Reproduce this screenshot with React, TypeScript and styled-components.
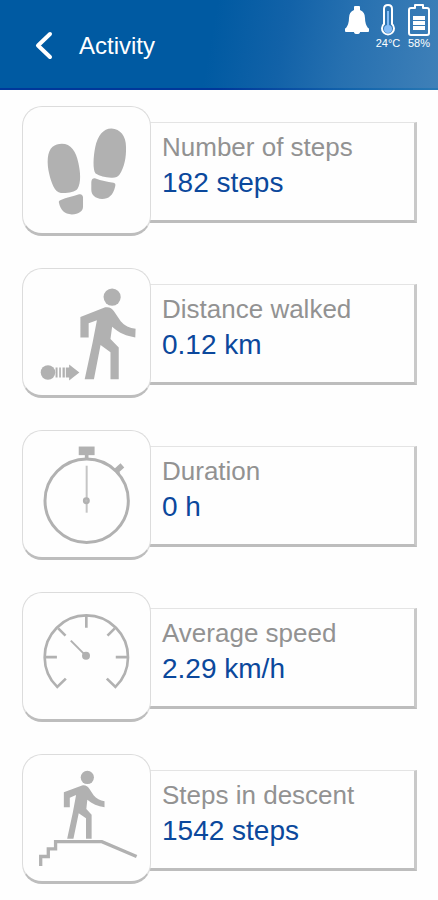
import React from "react";
import styled, { createGlobalStyle } from "styled-components";

const GlobalStyle = createGlobalStyle`
  *, *::before, *::after { box-sizing: border-box; }
  body {
    margin: 0;
    background: #fefefe;
    font-family: "Liberation Sans", Arial, sans-serif;
  }
`;

const Header = styled.header`
  display: flex;
  justify-content: space-between;
  height: 90px;
  background:
    linear-gradient(90deg, #00379a 50%, #1264ac 80%, #2878b4) bottom / 100% 2px no-repeat,
    linear-gradient(100deg, #005aa2 48%, #1262a8 64%, #2670b0 78%, #3f80b8 100%);
  color: #fff;
`;

const Heading = styled.div`
  display: flex;
  align-items: center;
  gap: 24px;
  padding-left: 34px;
`;

const BackButton = styled.button`
  display: flex;
  padding: 0;
  border: 0;
  background: none;
  color: inherit;
  cursor: pointer;
`;

const Title = styled.h1`
  margin: 0;
  padding-top: 2px;
  font-size: 24px;
  font-weight: 400;
  line-height: 28px;
`;

const StatusBar = styled.div`
  display: flex;
  gap: 5px;
  padding: 4px 6px 0 0;
`;

const Status = styled.div`
  display: flex;
  flex-direction: column;
  align-items: center;
  min-width: 26px;
  font-size: 11px;
  line-height: 14px;
`;

const List = styled.ul`
  display: flex;
  flex-direction: column;
  gap: 32px;
  margin: 0;
  padding: 16px 21px 16px 22px;
  list-style: none;
`;

const Row = styled.li`
  display: flex;
`;

const Tile = styled.div`
  flex: none;
  z-index: 1;
  width: 129px;
  height: 130px;
  border: 1px solid #dcdcdc;
  border-bottom: 3px solid #bdbdbd;
  border-radius: 20px;
  background: #fefefe;
`;

const TileIcon = styled.svg`
  display: block;
  width: 100%;
  height: 100%;
  color: #b1b1b1;
`;

const Panel = styled.dl`
  flex: 1;
  margin: 16px 0 13px -3px;
  padding: 8px 14px 10px;
  border-top: 1px solid #e4e4e4;
  border-right: 3px solid #c9c9c9;
  border-bottom: 3px solid #bdbdbd;
`;

const Label = styled.dt`
  font-size: 26px;
  line-height: 32px;
  color: #929292;
`;

const Value = styled.dd`
  margin: 2px 0 0;
  font-size: 28px;
  line-height: 36px;
  color: #0b489c;
`;

const WALKER =
  "M272 143 C284 141 292 145 298 154 L319 185 C330 198 346 206 364 208 L363 234 C337 230 315 222 293 202 L288 239 L313 264 L313 360 L288 360 L288 279 L258 257 L238 360 L210 360 L234 249 L247 182 L222 191 L222 234 L197 234 L197 172 Z";

const FootprintsIcon = () => (
  <g fill="currentColor">
    <path d="M141 138 C168 138 184 161 191 196 C197 224 200 254 188 275 C180 284 160 288 138 287 C119 284 109 255 103 230 C95 197 96 161 113 147 C121 141 130 138 141 138 Z" />
    <path d="M138 308 C155 301 174 297 193 291 C200 289 205 294 205 301 L205 328 C205 342 193 351 171 352 C149 351 137 339 132 316 C131 312 133 310 138 308 Z" />
    <path d="M291 92 C318 93 335 115 335 148 C336 179 330 210 315 232 C310 239 302 242 290 241 C271 240 256 236 243 228 C234 218 236 176 242 148 C249 114 266 92 291 92 Z" />
    <path d="M243 243 C260 250 278 252 297 256 C303 257 304 262 302 268 C296 294 282 305 263 305 C241 304 230 292 230 277 L230 255 C230 246 235 241 243 243 Z" />
  </g>
);

const DistanceIcon = () => (
  <g fill="currentColor">
    <circle cx="293" cy="112" r="26" />
    <path d={WALKER} />
    <circle cx="99" cy="340" r="22" />
    <path d="M122 325h6v30h-6z M133 325h5v30h-5z M143 325h7v30h-7z M153 325h10v-9l31 24l-31 24v-9h-10z" />
  </g>
);

const StopwatchIcon = () => (
  <g fill="none" stroke="currentColor">
    <circle cx="216" cy="238" r="126" strokeWidth="9" />
    <path d="M216 99 V112" strokeWidth="11" />
    <path d="M192 87 H240" strokeWidth="26" />
    <path d="M304 149 L324 131" strokeWidth="17" />
    <path d="M300 143 L315 157" strokeWidth="8" />
    <path d="M216 132 V274" strokeWidth="6" strokeOpacity="0.75" />
    <circle cx="215" cy="238" r="7" fill="#bdbdbd" strokeWidth="7" />
  </g>
);

const GaugeIcon = () => (
  <g fill="none" stroke="currentColor" strokeWidth="8">
    <path d="M153 286 L127 311 A126 126 0 1 1 303 311 L277 286" />
    <path d="M215 96 V132 M89 221 H126 M341 221 H304 M130 134 L152 156 M301 134 L279 156" />
    <path d="M168 171 L214 217" strokeWidth="6" />
    <circle cx="214" cy="217" r="12" fill="currentColor" stroke="none" />
  </g>
);

const DescentIcon = () => (
  <g>
    <circle cx="218" cy="95" r="20" fill="currentColor" />
    <path
      d="M202 119 C212 117 219 121 224 129 L237 149 C245 159 257 165 270 167 L270 185 C250 182 232 174 218 162 L215 190 L231 208 L231 280 L214 280 L214 218 L192 203 L176 280 L157 280 L174 202 L184 148 L165 156 L165 185 L147 185 L147 140 Z"
      fill="currentColor"
    />
    <path
      d="M77 363 V334 H100 V311 H122 V289 H262 L367 334"
      fill="none"
      stroke="currentColor"
      strokeWidth="10"
    />
  </g>
);

const BellIcon = () => (
  <svg width="26" height="31" viewBox="0 0 26 31" fill="currentColor" aria-label="Notifications" role="img">
    <path d="M10 3 Q10 2 11 2 H15 Q16 2 16 3 V6 Q21 8 21 14 Q21 20 24 24 H2 Q5 20 5 14 Q5 8 10 6 Z" />
    <rect x="1" y="24" width="24" height="4" rx="1" />
    <path d="M10 28 H16 Q16 30 13 30 Q10 30 10 28 Z" />
  </svg>
);

const ThermometerIcon = () => (
  <svg width="16" height="32" viewBox="0 0 16 32" aria-hidden="true">
    <path
      d="M4 5 Q4 1 8 1 Q12 1 12 5 V20 A6 6 0 1 1 4 20 Z"
      fill="none"
      stroke="#fff"
      strokeWidth="2"
    />
    <circle cx="8" cy="25" r="4" fill="#85bdf8" />
    <path d="M8 7 V23" stroke="#85bdf8" strokeWidth="2" />
  </svg>
);

const BatteryIcon = () => (
  <svg width="22" height="32" viewBox="0 0 22 32" aria-hidden="true">
    <path
      d="M7 4 V1 H15 V4 H19 Q21 4 21 6 V29 Q21 31 19 31 H3 Q1 31 1 29 V6 Q1 4 3 4 Z"
      fill="none"
      stroke="#fff"
      strokeWidth="2"
      strokeLinejoin="round"
    />
    <path d="M5 12h12v4H5z M5 17h12v4H5z M5 22h12v4H5z" fill="#fff" />
  </svg>
);

const metrics = [
  { label: "Number of steps", value: "182 steps", Icon: FootprintsIcon },
  { label: "Distance walked", value: "0.12 km", Icon: DistanceIcon },
  { label: "Duration", value: "0 h", Icon: StopwatchIcon },
  { label: "Average speed", value: "2.29 km/h", Icon: GaugeIcon },
  { label: "Steps in descent", value: "1542 steps", Icon: DescentIcon },
];

export default function App() {
  return (
    <>
      <GlobalStyle />
      <Header>
        <Heading>
          <BackButton type="button" aria-label="Back">
            <svg width="21" height="30" viewBox="0 0 21 30" fill="none" stroke="currentColor">
              <path d="M16 4 L4 15.5 L16 27" strokeWidth="4" strokeLinecap="round" strokeLinejoin="round" />
            </svg>
          </BackButton>
          <Title>Activity</Title>
        </Heading>
        <StatusBar>
          <Status>
            <BellIcon />
          </Status>
          <Status>
            <ThermometerIcon />
            <span>24°C</span>
          </Status>
          <Status>
            <BatteryIcon />
            <span>58%</span>
          </Status>
        </StatusBar>
      </Header>
      <main>
        <List>
          {metrics.map(({ label, value, Icon }) => (
            <Row key={label}>
              <Tile>
                <TileIcon viewBox="25 27 381 381" aria-hidden="true">
                  <Icon />
                </TileIcon>
              </Tile>
              <Panel>
                <Label>{label}</Label>
                <Value>{value}</Value>
              </Panel>
            </Row>
          ))}
        </List>
      </main>
    </>
  );
}
